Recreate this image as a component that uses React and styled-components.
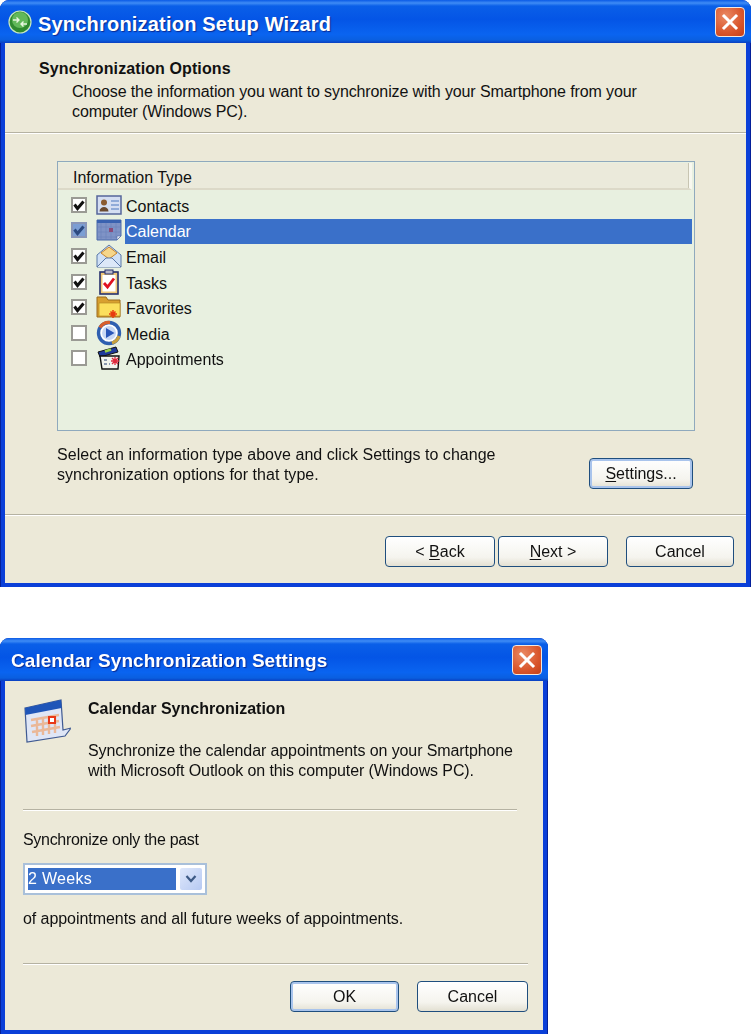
import styled, { createGlobalStyle } from 'styled-components';

const GlobalStyle = createGlobalStyle`
  html, body { margin: 0; padding: 0; background: #fff; }
  body { font-family: "Liberation Sans", Arial, sans-serif; font-size: 16px; color: #111; }
`;

const Page = styled.div`
  width: 755px;
  height: 1034px;
  overflow: hidden;
  display: flex;
  flex-direction: column;
  gap: 51px;
  filter: blur(0.35px);
`;

const Window = styled.section`
  width: ${(p) => p.$w}px;
  height: ${(p) => p.$h}px;
  box-sizing: border-box;
  display: flex;
  flex-direction: column;
  border-radius: 9px 9px 0 0;
  background: #0a3fd8;
  padding: 0 4px 4px 4px;
  border-left: 1px solid #04209a;
  border-right: 1px solid #04209a;
`;

const TitleBar = styled.header`
  height: 43px;
  flex: none;
  margin: 0 -5px;
  display: flex;
  align-items: center;
  gap: 6px;
  padding: 0 6px 0 ${(p) => p.$pad}px;
  border-radius: 9px 9px 0 0;
  background: linear-gradient(180deg, #0a5ae6 0%, #3f8cf5 7%, #0a5fe8 14%, #0455e6 45%, #0a64f0 80%, #0a5fe0 93%, #0a3fc0 100%);
`;

const TitleText = styled.h1`
  flex: 1;
  margin: 0;
  padding-top: ${(p) => p.$pt}px;
  font-size: ${(p) => p.$size}px;
  font-weight: 700;
  letter-spacing: ${(p) => p.$ls}px;
  color: #fff;
  text-shadow: 1px 1px 1px #0a2a90;
`;

const CloseButton = styled.div`
  width: 30px;
  height: 30px;
  flex: none;
  border: 1px solid #f2e8e0;
  border-radius: 4px;
  box-sizing: border-box;
  display: flex;
  align-items: center;
  justify-content: center;
  background: radial-gradient(circle at 35% 30%, #ea8a64, #d9562c 60%, #c43f18);
`;

const Body = styled.div`
  flex: 1;
  min-height: 0;
  background: #ece9d8;
  display: flex;
  flex-direction: column;
`;

const WizardHeader = styled.div`
  height: 89px;
  flex: none;
  box-sizing: border-box;
  padding: 15px 0 0 34px;
`;

const Heading = styled.h2`
  margin: 0;
  font-size: 16px;
  line-height: 22px;
  font-weight: 700;
  letter-spacing: ${(p) => p.$ls || 0}px;
`;

const Description = styled.p`
  margin: ${(p) => p.$mt || 0}px 0 0 ${(p) => p.$ml || 0}px;
  font-size: 16px;
  line-height: 20px;
  letter-spacing: ${(p) => p.$ls || 0}px;
`;

const Rule = styled.hr`
  flex: none;
  height: 1px;
  margin: 0 ${(p) => p.$mr || 0}px 0 ${(p) => p.$ml || 0}px;
  border: 0;
  background: #b5b2a2;
  box-shadow: 0 1px 0 #fff;
`;

const ListBox = styled.div`
  flex: none;
  width: 638px;
  height: 270px;
  box-sizing: border-box;
  margin: 28px 0 0 52px;
  border: 1px solid #8fa9bd;
  background: #e8f0e0;
`;

const ListHeader = styled.div`
  height: 27px;
  box-sizing: border-box;
  padding-left: 15px;
  line-height: 30px;
  background: #ebeadb;
  border-bottom: 2px solid #dcd9c8;
  border-right: 3px solid #f8f8f0;
  margin: 1px 2px 0 0;
  font-size: 16px;
  box-shadow: inset -1px 0 0 #c8c5b2;
`;

const Rows = styled.ul`
  list-style: none;
  margin: 3.5px 0 0;
  padding: 0;
`;

const Row = styled.li`
  height: 25.6px;
  display: flex;
  align-items: center;
  padding-left: 13px;
`;

const Check = styled.span`
  width: 16px;
  height: 16px;
  box-sizing: border-box;
  flex: none;
  margin-top: -3px;
  border: 2px solid ${(p) => (p.$selected ? '#8a96b8' : '#9a9a94')};
  background: ${(p) => (p.$selected ? '#7c9ed4' : '#fff')};
  display: flex;
  align-items: center;
  justify-content: center;
`;

const RowIcon = styled.svg`
  width: 26px;
  height: 26px;
  flex: none;
  margin: -3px 3px 0 9px;
`;

const RowLabel = styled.span`
  flex: 1;
  height: 25px;
  line-height: 25px;
  padding-left: 1px;
  margin-right: 2px;
  background: ${(p) => (p.$selected ? '#3a70c9' : 'transparent')};
  color: ${(p) => (p.$selected ? '#fff' : '#111')};
`;

const SettingsRow = styled.div`
  flex: none;
  height: 83px;
  box-sizing: border-box;
  display: flex;
  align-items: flex-start;
  justify-content: space-between;
  padding: 13px 53px 0 52px;
`;

const WizardText = styled.p`
  margin: 1px 0 0;
  line-height: 20px;
  letter-spacing: 0.03px;
`;

const Button = styled.button`
  flex: none;
  width: ${(p) => p.$w}px;
  height: 31px;
  margin-top: ${(p) => p.$mt || 0}px;
  padding: 0;
  font: inherit;
  color: #111;
  border: 1px solid #1f4e7e;
  border-radius: 4px;
  background: linear-gradient(180deg, #ffffff 0%, #f5f4ee 70%, #e3e0d2 100%);
  box-shadow: ${(p) => (p.$focus ? 'inset 0 0 0 2px #a9c4ec' : 'none')};
  u { text-underline-offset: 2px; }
`;

const Footer = styled.div`
  flex: none;
  display: flex;
  justify-content: flex-end;
  padding: ${(p) => p.$pt}px ${(p) => p.$pr}px 0 0;
`;

const FooterGroup = styled.div`
  display: flex;
  gap: ${(p) => p.$gap}px;
  margin-right: ${(p) => p.$mr || 0}px;
`;

const CalendarHead = styled.div`
  flex: none;
  height: 128px;
  display: flex;
  padding: 17px 0 0 18px;
  box-sizing: border-box;
`;

const CalendarText = styled.div`
  margin-left: 17px;
`;

const Section = styled.div`
  flex: none;
  height: 153px;
  box-sizing: border-box;
  padding: 20px 0 0 18px;
`;

const Combo = styled.div`
  width: 184px;
  height: 32px;
  margin: 13px 0 14px;
  box-sizing: border-box;
  border: 2px solid #a9c0da;
  background: #fff;
  padding: 3px;
  display: flex;
  gap: 4px;
`;

const ComboValue = styled.div`
  flex: 1;
  background: #3a70c9;
  color: #fff;
  line-height: 22px;
  letter-spacing: 0.3px;
`;

const ComboArrow = styled.div`
  width: 22px;
  border-radius: 2px;
  background: linear-gradient(135deg, #dfe8fb, #b6c9f2);
  display: flex;
  align-items: center;
  justify-content: center;
`;

const SyncLogo = () => (
  <svg width="24" height="24" viewBox="0 0 24 24">
    <circle cx="12" cy="12" r="11" fill="#2f8a2f" stroke="#c8e8c0" strokeWidth="1.2" />
    <circle cx="12" cy="10" r="8" fill="#62b85a" />
    <path d="M5 10h6M8.5 7.5 11 10l-2.5 2.5M19 14h-6M15.5 11.5 13 14l2.5 2.5" fill="none" stroke="#e8f6e0" strokeWidth="1.4" />
  </svg>
);

const CloseGlyph = () => (
  <svg width="20" height="20" viewBox="0 0 20 20">
    <path d="M4 4 16 16M16 4 4 16" stroke="#fff" strokeWidth="3" strokeLinecap="square" />
  </svg>
);

const Tick = ({ color }) => (
  <svg width="12" height="12" viewBox="0 0 12 12">
    <path d="M1.5 5.5 4.5 9.5 10.5 2.5" fill="none" stroke={color} strokeWidth="3" />
  </svg>
);

const ContactsIcon = () => (
  <RowIcon viewBox="0 0 26 26">
    <rect x="1" y="4" width="24" height="18" fill="#d4def2" stroke="#56669a" strokeWidth="1.5" />
    <circle cx="8" cy="10.5" r="3" fill="#8a5a30" />
    <path d="M3.5 19.5c0-6 9-6 9 0z" fill="#6a4a30" />
    <path d="M15 9h8M15 13h8M15 17h8" stroke="#7a9ad0" strokeWidth="1.5" />
  </RowIcon>
);

const CalendarIcon = () => (
  <RowIcon viewBox="0 0 26 26">
    <path d="M1 3h24v16l-4 4H1z" fill="#7f93c6" stroke="#4a68a8" />
    <path d="M1 3h24v3H1z" fill="#3a62b0" />
    <path d="M5 6v17M10 6v17M15 6v17M20 6v15M1 10h24M1 15h24M1 20h20" stroke="#6a80b8" strokeWidth="0.6" />
    <rect x="13" y="11" width="4" height="4" fill="#8a4a78" />
    <path d="M21 23v-4h4z" fill="#e8ecf6" stroke="#4a68a8" strokeWidth="0.6" />
  </RowIcon>
);

const EmailIcon = () => (
  <RowIcon viewBox="0 0 26 26">
    <path d="M1 12 13 2l12 10v12H1z" fill="#cfe0f6" stroke="#5a78a8" />
    <path d="M5 10 13 4l8 6-8 6z" fill="#f6d68a" stroke="#c8842c" />
    <path d="M1 24 10 15h6l9 9" fill="#dce8f8" stroke="#5a78a8" />
  </RowIcon>
);

const TasksIcon = () => (
  <RowIcon viewBox="0 0 26 26">
    <rect x="4" y="3" width="18" height="22" fill="#f0c878" stroke="#26316e" strokeWidth="1.6" />
    <rect x="6.5" y="6" width="13" height="16.5" fill="#fff" />
    <rect x="9" y="1" width="8" height="4" fill="#b8b8c8" stroke="#26316e" />
    <path d="M8 14l3.5 4L18 9.5" fill="none" stroke="#e01020" strokeWidth="2.8" />
  </RowIcon>
);

const FavoritesIcon = () => (
  <RowIcon viewBox="0 0 26 26">
    <path d="M1 3h9l2 3h12v17H1z" fill="#d8a030" stroke="#9a6a1c" />
    <path d="M3 9h21v13H3z" fill="#fbdf5c" stroke="#b88a24" strokeWidth="0.7" />
    <path d="M13 20h8M17 16v8M14.5 17.5l5 5M19.5 17.5l-5 5" stroke="#e83a10" strokeWidth="1.5" />
  </RowIcon>
);

const MediaIcon = () => (
  <RowIcon viewBox="0 0 26 26">
    <circle cx="13" cy="13" r="10.5" fill="#fff" stroke="#2f5fb0" strokeWidth="3.4" />
    <path d="M4 7.5A10.5 10.5 0 0 1 14 2.5" fill="none" stroke="#d8602c" strokeWidth="3.2" />
    <path d="M23 16a10.5 10.5 0 0 1-7 7" fill="none" stroke="#c8a03c" strokeWidth="3.2" />
    <circle cx="13" cy="13" r="7" fill="#c8d8f4" />
    <path d="M10 8 18.5 13 10 18z" fill="#2a56b8" />
  </RowIcon>
);

const AppointmentsIcon = () => (
  <RowIcon viewBox="0 0 26 26">
    <path d="M2 7 20 2l2 5-18 5z" fill="#1e3a9a" stroke="#111" />
    <path d="M4 11h19l-1 13H6z" fill="#f2f4ee" stroke="#111" strokeWidth="1.4" />
    <path d="M9 6.5 15 4.5" stroke="#9ad04a" strokeWidth="2.5" />
    <path d="M8 15h3M8 19h3M13 19h1" stroke="#6a7a9a" strokeWidth="1.5" />
    <path d="M15 16h8M19 12v8M16 13l6 6M22 13l-6 6" stroke="#e0283c" strokeWidth="1.3" />
  </RowIcon>
);

const BigCalendarIcon = () => (
  <svg width="48" height="46" viewBox="0 0 48 46">
    <path d="M2 10 38 2l2 30 8-2-6 8L4 44z" fill="#dfe6f6" stroke="#3f5a92" strokeWidth="1.2" />
    <path d="M2 10 38 2l.6 8L2.4 17z" fill="#1f55b8" />
    <path d="M8 22 36 17M8 28 36 23M9 34 37 29M14 20v18M20 19v18M26 18v18M32 17v18" stroke="#eab898" strokeWidth="2.4" />
    <rect x="26" y="19" width="6" height="6" fill="#fff" stroke="#e83818" strokeWidth="2" />
  </svg>
);

const items = [
  { label: 'Contacts', icon: ContactsIcon, checked: true },
  { label: 'Calendar', icon: CalendarIcon, checked: true, selected: true },
  { label: 'Email', icon: EmailIcon, checked: true },
  { label: 'Tasks', icon: TasksIcon, checked: true },
  { label: 'Favorites', icon: FavoritesIcon, checked: true },
  { label: 'Media', icon: MediaIcon },
  { label: 'Appointments', icon: AppointmentsIcon },
];

export default function App() {
  return (
    <Page>
      <GlobalStyle />
      <Window $w={751} $h={587}>
        <TitleBar $pad={8}>
          <SyncLogo />
          <TitleText $size={20} $ls={0.2} $pt={6}>Synchronization Setup Wizard</TitleText>
          <CloseButton><CloseGlyph /></CloseButton>
        </TitleBar>
        <Body>
          <WizardHeader>
            <Heading $ls={0.1}>Synchronization Options</Heading>
            <Description $ml={33} $mt={2} $ls={-0.115}>
              Choose the information you want to synchronize with your Smartphone from your<br />
              computer (Windows PC).
            </Description>
          </WizardHeader>
          <Rule />
          <ListBox>
            <ListHeader>Information Type</ListHeader>
            <Rows>
              {items.map((item) => (
                <Row key={item.label}>
                  <Check $selected={item.selected}>
                    {item.checked && <Tick color={item.selected ? '#2c4a80' : '#111'} />}
                  </Check>
                  <item.icon />
                  <RowLabel $selected={item.selected}>{item.label}</RowLabel>
                </Row>
              ))}
            </Rows>
          </ListBox>
          <SettingsRow>
            <WizardText>
              Select an information type above and click Settings to change<br />
              synchronization options for that type.
            </WizardText>
            <Button $w={104} $mt={14} $focus><u>S</u>ettings...</Button>
          </SettingsRow>
          <Rule />
          <Footer $pt={21} $pr={12}>
            <FooterGroup $gap={3} $mr={18}>
              <Button $w={110}>&lt; <u>B</u>ack</Button>
              <Button $w={110}><u>N</u>ext &gt;</Button>
            </FooterGroup>
            <Button $w={108}>Cancel</Button>
          </Footer>
        </Body>
      </Window>
      <Window $w={548} $h={396}>
        <TitleBar $pad={11}>
          <TitleText $size={19} $ls={0.05} $pt={3}>Calendar Synchronization Settings</TitleText>
          <CloseButton><CloseGlyph /></CloseButton>
        </TitleBar>
        <Body>
          <CalendarHead>
            <BigCalendarIcon />
            <CalendarText>
              <Heading>Calendar Synchronization</Heading>
              <Description $mt={21} $ls={-0.1}>
                Synchronize the calendar appointments on your Smartphone<br />
                with Microsoft Outlook on this computer (Windows PC).
              </Description>
            </CalendarText>
          </CalendarHead>
          <Rule $ml={18} $mr={26} />
          <Section>
            <Description $ls={-0.3}>Synchronize only the past</Description>
            <Combo>
              <ComboValue>2 Weeks</ComboValue>
              <ComboArrow>
                <svg width="12" height="10" viewBox="0 0 12 10">
                  <path d="M1.5 2 6 7l4.5-5" fill="none" stroke="#3d5a85" strokeWidth="2.2" />
                </svg>
              </ComboArrow>
            </Combo>
            <Description $ls={-0.06}>of appointments and all future weeks of appointments.</Description>
          </Section>
          <Rule $ml={18} $mr={15} />
          <Footer $pt={17} $pr={15}>
            <FooterGroup $gap={18}>
              <Button $w={109} $focus>OK</Button>
              <Button $w={111}>Cancel</Button>
            </FooterGroup>
          </Footer>
        </Body>
      </Window>
    </Page>
  );
}
